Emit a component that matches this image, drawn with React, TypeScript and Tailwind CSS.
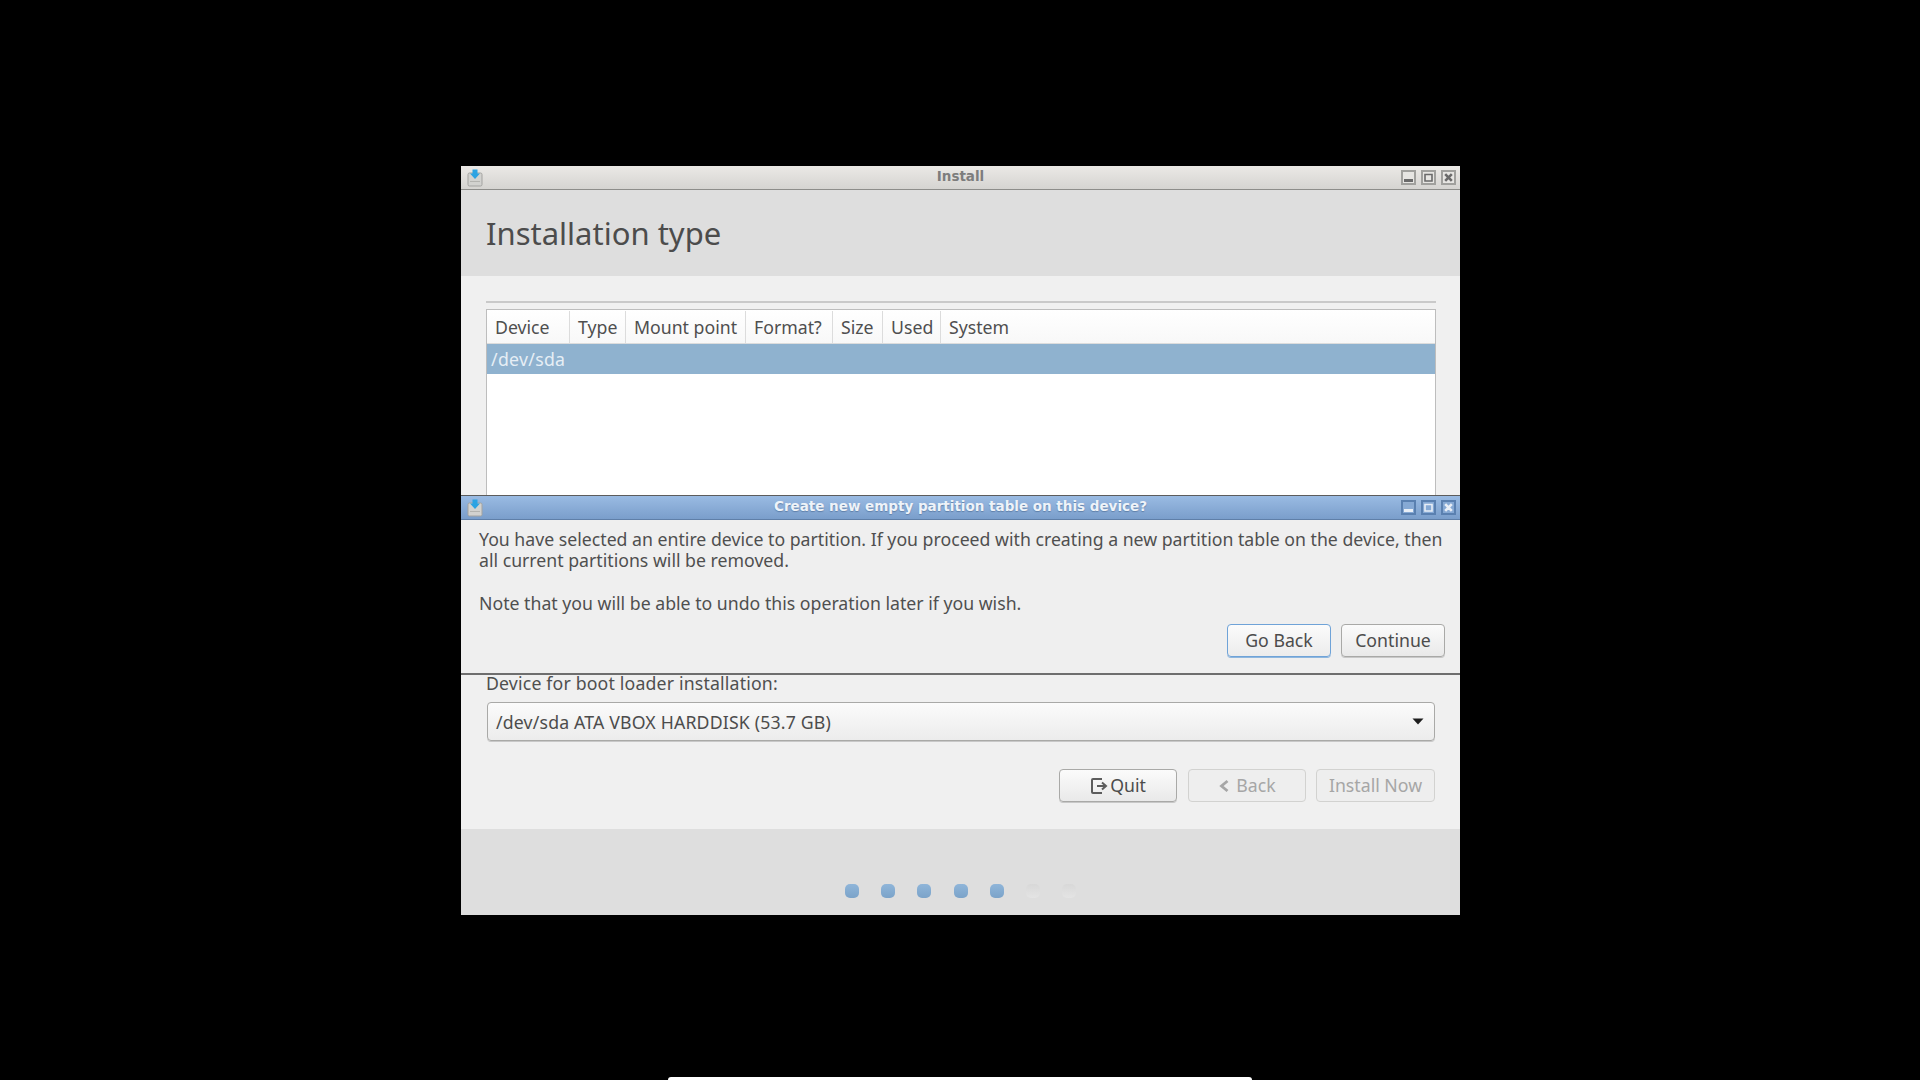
import type { ReactNode } from 'react';

const UI_FONT = "font-['Noto_Sans',sans-serif]";
const COLUMNS = ['Device', 'Type', 'Mount point', 'Format?', 'Size', 'Used', 'System'];
const COLUMN_WIDTHS = ['w-[83px]', 'w-[56px]', 'w-[120px]', 'w-[87px]', 'w-[50px]', 'w-[58px]', 'flex-1'];

// Icono del instalador: caja gris con flecha azul
function InstallerIcon() {
  return (
    <svg width="16" height="18" viewBox="0 0 16 18" className="ml-[6px]">
      <rect x="1" y="4" width="14" height="13" rx="1.5" fill="#d2d2cf" stroke="#a3a3a0" />
      <rect x="3" y="12" width="10" height="1" fill="#b4b4b0" />
      <path d="M5.5 0.5h5v4h2.5l-5 5.5-5-5.5h2.5z" fill="#2ba3e3" />
    </svg>
  );
}

function WindowButton({ active, children }: { active: boolean; children: ReactNode }) {
  return (
    <div
      className={`flex h-[15px] w-[15px] items-center justify-center border-2 ${
        active ? 'border-[#5a80b0] bg-[#86a9d4] text-[#e8eef6]' : 'border-[#a0a09d] bg-[#e6e5e2] text-[#6a6a6a]'
      }`}
    >
      {children}
    </div>
  );
}

function WindowButtons({ active = false }: { active?: boolean }) {
  return (
    <div className="flex gap-[5px] pr-[4px]">
      <WindowButton active={active}>
        <svg width="11" height="11" viewBox="0 0 11 11">
          <rect x="1" y="7" width="9" height="3" fill="currentColor" />
        </svg>
      </WindowButton>
      <WindowButton active={active}>
        <svg width="11" height="11" viewBox="0 0 11 11">
          <path d="M2 2.5h7v6.5h-7z" fill="none" stroke="currentColor" strokeWidth="1.6" />
        </svg>
      </WindowButton>
      <WindowButton active={active}>
        <svg width="11" height="11" viewBox="0 0 11 11">
          <path d="M2.2 2.2l6.6 6.6M8.8 2.2l-6.6 6.6" stroke="currentColor" strokeWidth="2.6" />
        </svg>
      </WindowButton>
    </div>
  );
}

function TitleBar({ title, active = false }: { title: string; active?: boolean }) {
  return (
    <div
      className={`flex h-[24px] items-center border-b ${
        active
          ? 'border-[#5f7fa8] bg-gradient-to-b from-[#9abbe3] to-[#7a9ecb]'
          : 'border-[#8d8d8a] bg-gradient-to-b from-[#ebe9e6] to-[#d5d4d1]'
      }`}
    >
      <div className="flex flex-1 basis-0">
        <InstallerIcon />
      </div>
      <div
        className={`pb-[2px] font-['DejaVu_Sans',sans-serif] text-[13.5px] font-bold ${
          active ? 'text-[#eef3f9] [text-shadow:0_1px_1px_#5f7fa8]' : 'text-[#7d7d7d]'
        }`}
      >
        {title}
      </div>
      <div className="flex flex-1 basis-0 justify-end">
        <WindowButtons active={active} />
      </div>
    </div>
  );
}

function Button({
  children,
  focused = false,
  disabled = false,
  width,
}: {
  children: ReactNode;
  focused?: boolean;
  disabled?: boolean;
  width: string;
}) {
  let look = 'border-[#a9a9a7] bg-gradient-to-b from-[#fbfbfb] to-[#e9e9e9] text-[#4c4c4c] shadow-[0_1px_0_#c8c8c8]';
  if (focused) look = 'border-[#6fa3d8] bg-gradient-to-b from-[#fbfbfb] to-[#ececec] text-[#4c4c4c] shadow-[0_1px_0_#8fb7de]';
  if (disabled) look = 'border-[#d2d2d0] bg-[#eeeeee] text-[#a6a6a6]';
  return (
    <div className={`flex h-[33px] items-center justify-center rounded-[4px] border text-[17.7px] ${width} ${look}`}>
      {children}
    </div>
  );
}

function ProgressDots() {
  const steps = [true, true, true, true, true, false, false];
  return (
    <div className="flex h-[86px] justify-center gap-[22.3px] bg-[#dedede] pt-[55px]">
      {steps.map((done, i) => (
        <div
          key={i}
          className={`h-[14px] w-[14px] rounded-[5px] ${
            done ? 'bg-gradient-to-b from-[#8fb5d9] to-[#7ba3c9]' : 'bg-gradient-to-b from-[#d8d8d8] to-[#e4e4e4]'
          }`}
        />
      ))}
    </div>
  );
}

// Diálogo de confirmación que se superpone a la ventana principal
function ConfirmDialog() {
  return (
    <div className="absolute inset-x-0 top-[329px] h-[180px] border-t border-b-2 border-t-[#5c5c5c] border-b-[#6e6e6e] bg-[#efefef]">
      <TitleBar title="Create new empty partition table on this device?" active />
      <div className="pl-[18px] pr-[14px] pt-[9px] text-[17.7px] leading-[21.3px] text-[#4f4f4f]">
        <p className="whitespace-nowrap">
          You have selected an entire device to partition. If you proceed with creating a new partition table on the device, then
        </p>
        <p>all current partitions will be removed.</p>
        <p className="mt-[21.3px]">Note that you will be able to undo this operation later if you wish.</p>
      </div>
      <div className="flex justify-end gap-[10px] pr-[15px] pt-[10px]">
        <Button focused width="w-[104px]">Go Back</Button>
        <Button width="w-[104px]">Continue</Button>
      </div>
    </div>
  );
}

export default function App() {
  return (
    <div className={`relative h-screen w-full overflow-hidden bg-black ${UI_FONT}`}>
      {/* Ventana principal del instalador */}
      <div className="absolute left-[461px] top-[166px] w-[999px]">
        <TitleBar title="Install" />
        <div className="flex h-[86px] items-center bg-[#dedede] pl-[25px] text-[31px] text-[#4c4c4c]">
          Installation type
        </div>
        <div className="h-[553px] bg-[#f0f0f0] pl-[25px] pr-[24px] pt-[25px]">
          <div className="h-[2px] bg-[#c9c9c9]" />
          <div className="mt-[6px] h-[360px] border border-[#bdbdbd] bg-white">
            <div className="flex h-[34px] border-b border-[#dcdcdc] bg-gradient-to-b from-white to-[#f8f8f8] pt-[1px] text-[17.7px] text-[#4f4f4f]">
              {COLUMNS.map((name, i) => (
                <div key={name} className={`flex items-center border-r border-[#dcdcdc] pl-[8px] last:border-r-0 ${COLUMN_WIDTHS[i]}`}>
                  {name}
                </div>
              ))}
            </div>
            <div className="flex h-[30px] items-center bg-[#8fb2cf] pl-[4px] text-[17.7px] tracking-[0.3px] text-[#e6eef5]">/dev/sda</div>
          </div>
          <div className="mt-[4px] text-[17.7px] leading-[21px] tracking-[0.17px] text-[#4f4f4f]">Device for boot loader installation:</div>
          <div className="mx-[1px] mt-[8px] flex h-[39px] items-center justify-between rounded-[4px] border border-[#a9a9a7] bg-gradient-to-b from-[#fbfbfb] to-[#ececec] pl-[8px] pr-[10px] text-[17.7px] text-[#4c4c4c] shadow-[0_1px_0_#c8c8c8]">
            <span className="pt-[1px] tracking-[0.17px]">/dev/sda ATA VBOX HARDDISK (53.7 GB)</span>
            <svg width="12" height="7" viewBox="0 0 12 7">
              <path d="M0.5 0.5h11l-5.5 6z" fill="#1e1e1e" />
            </svg>
          </div>
          <div className="flex justify-end gap-[10px] pr-[1px] pt-[28px]">
            <Button width="mr-[1px] w-[118px]">
              <svg width="19" height="18" viewBox="0 0 19 18" className="mr-[1px]">
                <path d="M11 3V2H3a1 1 0 0 0-1 1v12a1 1 0 0 0 1 1h8v-1" fill="none" stroke="#5c5c5c" strokeWidth="2" />
                <path d="M7 9h8M12 5.5L16 9l-4 3.5" fill="none" stroke="#5c5c5c" strokeWidth="2" />
              </svg>
              Quit
            </Button>
            <Button disabled width="w-[118px]">
              <svg width="12" height="14" viewBox="0 0 12 14" className="mr-[6px]">
                <path d="M9.5 2L3.5 7l6 5" fill="none" stroke="#a6a6a6" strokeWidth="2.8" />
              </svg>
              Back
            </Button>
            <Button disabled width="w-[119px]">Install Now</Button>
          </div>
        </div>
        <ProgressDots />
        <ConfirmDialog />
      </div>

      {/* Borde del panel inferior que asoma en el límite de la pantalla */}
      <div className="absolute bottom-0 left-[668px] h-[3px] w-[584px] rounded-t-[3px] bg-white" />
    </div>
  );
}
